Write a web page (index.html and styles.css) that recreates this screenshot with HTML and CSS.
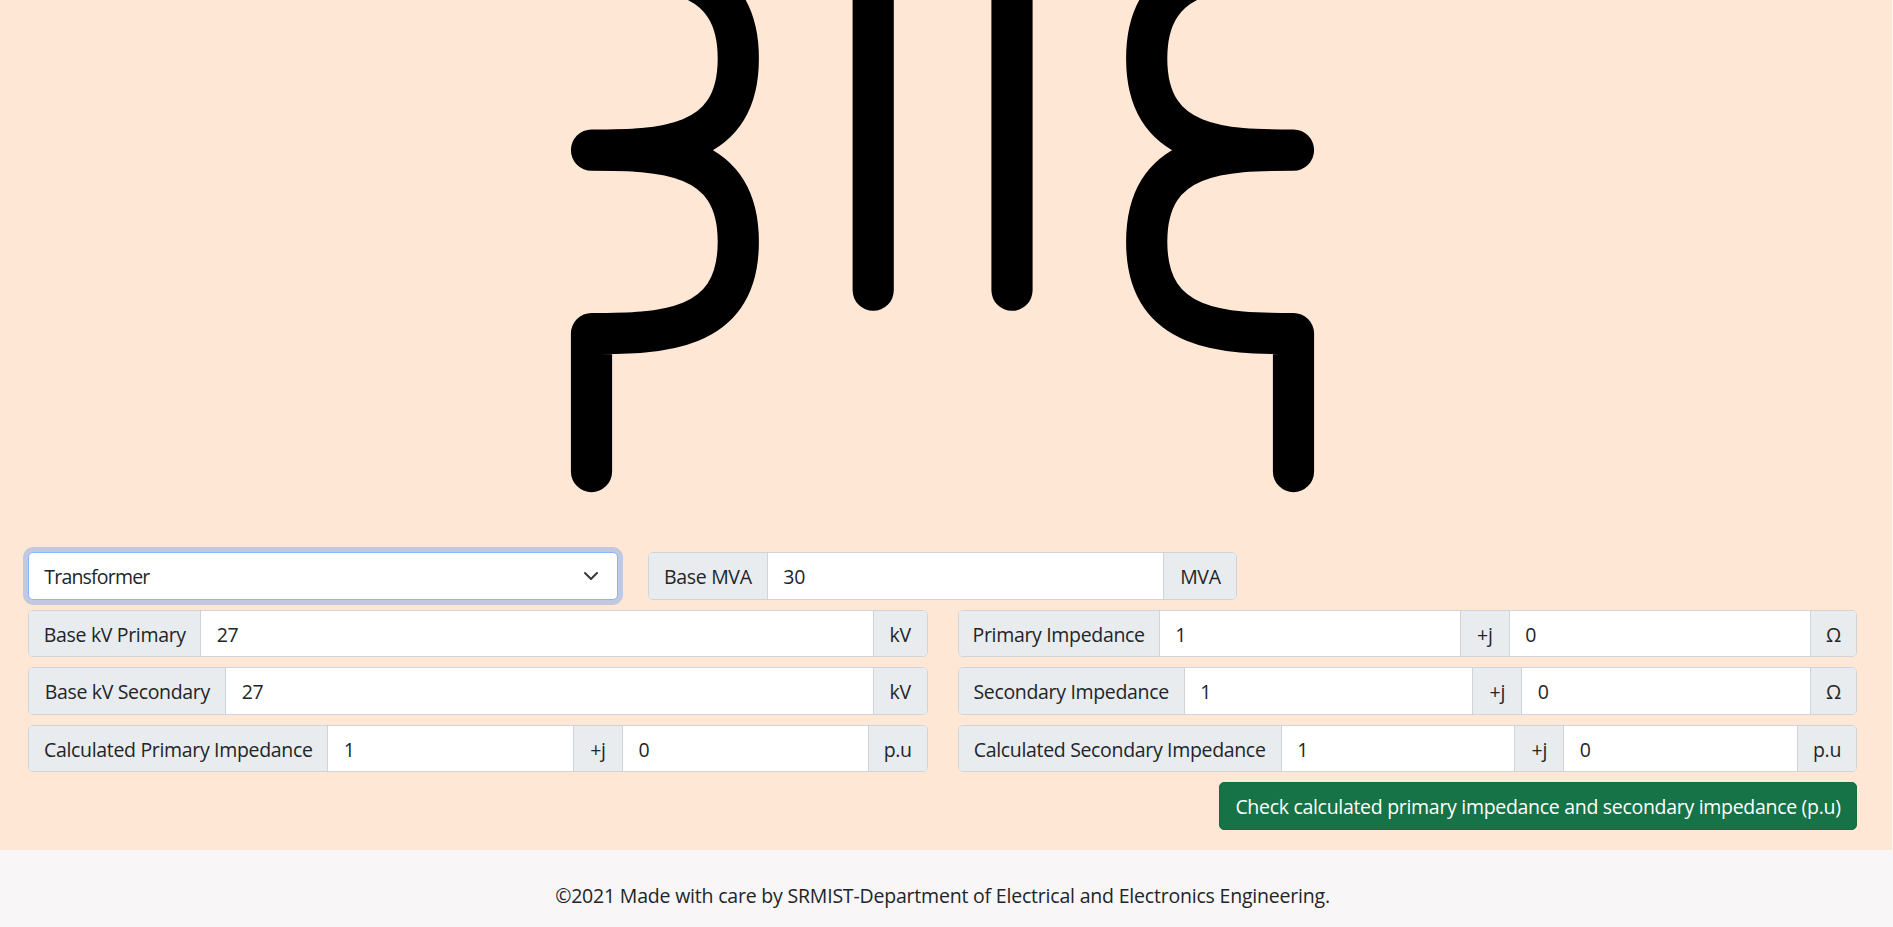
FILE: index.html
```html
<!DOCTYPE html>
<html lang="en">
<head>
<meta charset="utf-8">
<title>Per unit calculator</title>
<link rel="stylesheet" href="styles.css">
</head>
<body>
<main class="page">
  <svg class="diagram" width="1892" height="552" viewBox="0 0 1892 552">
    <g class="winding">
      <path d="M591.5 -33.4C660 -33.4 738.3 -32.4 738.3 58.3C738.3 149 660 150 591.5 150C660 150 738.3 151 738.3 241.7C738.3 332.4 660 333.4 591.5 333.4V471.4"/>
      <path d="M1293.5 -33.4C1225 -33.4 1146.7 -32.4 1146.7 58.3C1146.7 149 1225 150 1293.5 150C1225 150 1146.7 151 1146.7 241.7C1146.7 332.4 1225 333.4 1293.5 333.4V471.4"/>
      <path d="M873.2 -40V290.1M1012 -40V290.1"/>
    </g>
  </svg>
  <form class="form">
    <div class="row thirds">
      <div class="select"><span class="choice">Transformer</span>
        <svg width="16" height="16" viewBox="0 0 16 16"><path d="M2 5l6 6 6-6"/></svg>
      </div>
      <div class="group"><span class="addon w-base">Base MVA</span><input value="30"><span class="addon w-mva">MVA</span></div>
    </div>
    <div class="row halves">
      <div class="group"><span class="addon w-kvp">Base kV Primary</span><input value="27"><span class="addon w-kv">kV</span></div>
      <div class="group"><span class="addon w-pi">Primary Impedance</span><input value="1"><span class="addon w-j">+j</span><input value="0"><span class="addon w-ohm">Ω</span></div>
    </div>
    <div class="row halves">
      <div class="group"><span class="addon w-kvs">Base kV Secondary</span><input value="27"><span class="addon w-kv">kV</span></div>
      <div class="group"><span class="addon w-si">Secondary Impedance</span><input value="1"><span class="addon w-j">+j</span><input value="0"><span class="addon w-ohm">Ω</span></div>
    </div>
    <div class="row halves">
      <div class="group"><span class="addon w-cpi">Calculated Primary Impedance</span><input value="1"><span class="addon w-j">+j</span><input value="0"><span class="addon w-pu">p.u</span></div>
      <div class="group"><span class="addon w-csi">Calculated Secondary Impedance</span><input value="1"><span class="addon w-j">+j</span><input value="0"><span class="addon w-pu">p.u</span></div>
    </div>
    <div class="actions"><button class="check" type="button">Check calculated primary impedance and secondary impedance (p.u)</button></div>
  </form>
</main>
<footer class="footer">©2021 Made with care by SRMIST-Department of Electrical and Electronics Engineering.</footer>
</body>
</html>
```
FILE: styles.css
```css
* { box-sizing: border-box; }
body {
  margin: 0;
  height: 927px;
  overflow: hidden;
  background: #f8f6f7;
  color: #212529;
  font: 19.5px/30px "Open Sans", "Noto Sans", sans-serif;
  letter-spacing: -.33px;
}
.page { height: 850px; margin-right: 1px; background: #ffe7d6; }
.diagram { display: block; height: 552.3px; }
.winding { fill: none; stroke: #000; stroke-width: 41.2; stroke-linecap: round; stroke-linejoin: round; }
.form { display: flex; flex-direction: column; gap: 10px; padding: 0 35px 0 28.3px; }
.row { display: grid; height: 47.5px; column-gap: 30px; }
.thirds { grid-template-columns: repeat(3, 1fr); }
.halves { grid-template-columns: repeat(2, 1fr); }
.select {
  display: flex;
  align-items: center;
  justify-content: space-between;
  padding: 0 15px;
  border: 1px solid #86b7fe;
  border-radius: 5px;
  background: #fff;
  box-shadow: 0 0 0 5px rgba(13, 110, 253, .25);
}
.choice { padding-top: 2px; letter-spacing: -.8px; }
.select svg { margin-right: 2.5px; fill: none; stroke: #343a40; stroke-width: 2; stroke-linecap: round; stroke-linejoin: round; }
.group { display: flex; border: 1px solid #ced4da; border-radius: 5px; background: #fff; overflow: hidden; min-width: 0; }
.group input {
  flex: 1 1 0;
  min-width: 0;
  padding: 2px 15px 0 15.5px;
  border: 0;
  background: #fff;
  color: inherit;
  font: inherit;
  letter-spacing: inherit;
}
.addon { flex: none; display: flex; align-items: center; justify-content: center; padding-top: 2px; background: #e9ecef; white-space: nowrap; }
.addon:not(:first-child) { border-left: 1px solid #ced4da; }
.addon:not(:last-child) { border-right: 1px solid #ced4da; }
.w-base { width: 119px; }
.w-mva { width: 73px; }
.w-kvp { width: 172px; }
.w-kvs { width: 197px; }
.w-kv { width: 54px; }
.w-pi { width: 201px; }
.w-si { width: 226px; }
.w-j { width: 50px; }
.w-ohm { width: 46px; }
.w-cpi { width: 299px; }
.w-csi { width: 323px; }
.w-pu { width: 59px; }
.actions { display: flex; justify-content: flex-end; }
.check {
  width: 638px;
  height: 47.5px;
  padding: 2px 0 0;
  border: 1px solid #146c43;
  border-radius: 5px;
  background: #157347;
  color: #fff;
  font: inherit;
  letter-spacing: -.3px;
  white-space: nowrap;
}
.footer { padding: 31px 8px 0 0; text-align: center; letter-spacing: -.2px; }
```
